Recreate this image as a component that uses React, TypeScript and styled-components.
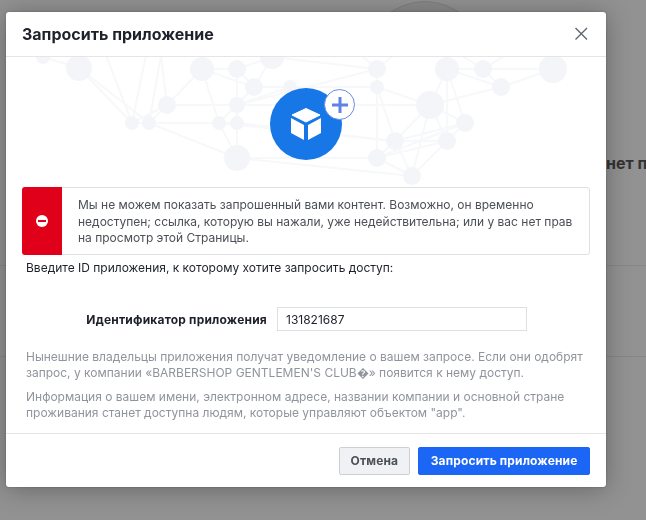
import React from 'react';
import styled, { createGlobalStyle } from 'styled-components';

const FONT = `Inter, "Liberation Sans", sans-serif`;

// node positions are relative to the hero block (page y - 57, page x - 6)
const nodes: [number, number, number][] = [
  [37, 0, 7], [73, 11, 13], [196, 12, 12], [231, 12, 9], [248, 30, 9], [266, 0, 12], [284, 30, 7],
  [161, 48, 9], [126, 66, 7], [143, 66, 7], [213, 66, 7], [231, 66, 7], [231, 48, 8], [231, 101, 13],
  [371, 12, 9], [371, 30, 7], [441, 12, 12], [477, 12, 9], [495, 30, 9], [547, 12, 14], [424, 48, 14],
  [459, 66, 9], [441, 84, 9], [389, 84, 9], [371, 101, 9], [406, 119, 9],
  // points above the clip, the lines run up under the header
  [100, -2, 0], [140, -2, 0], [155, -2, 0], [355, -2, 0], [388, -2, 0], [455, -2, 0], [500, -2, 0],
];

const edges: [number, number][] = [
  [0, 1], [1, 8], [1, 9], [8, 7], [9, 7], [7, 2], [2, 3], [3, 4], [4, 6], [5, 3], [5, 4], [2, 10], [2, 4],
  [7, 12], [12, 20], [8, 11], [9, 10], [9, 13], [10, 13], [11, 13], [12, 13], [3, 11], [4, 10], [4, 12], [13, 24],
  [13, 25], [6, 12], [14, 15], [15, 24], [15, 20], [15, 23], [14, 5], [16, 17], [17, 19], [16, 18], [17, 18],
  [18, 19], [18, 20], [16, 20], [16, 21], [16, 22], [20, 21], [20, 22], [20, 23], [21, 22], [21, 23], [22, 23],
  [22, 24], [23, 24], [23, 25], [24, 25], [22, 25], [21, 24], [10, 23], [11, 23], [20, 25], [6, 15], [14, 12],
  [26, 8], [27, 8], [28, 9], [29, 14], [30, 14], [31, 17], [32, 17], [28, 7],
];

const GlobalStyle = createGlobalStyle`
  html, body {
    margin: 0;
    padding: 0;
    background: #929292;
  }
  body {
    font-family: ${FONT};
  }
`;

const Page = styled.div`
  width: 646px;
  height: 520px;
  overflow: hidden;
  background: #929292;
  padding-top: 1px;
  box-sizing: border-box;
`;

const Avatar = styled.div`
  width: 120px;
  height: 120px;
  margin-left: 365px;
  border-radius: 50%;
  background: #8a8a8a;
  border: 1px solid #7f7f7f;
  box-sizing: border-box;
`;

const BackTitle = styled.div`
  margin: 32px 0 0 606px;
  width: 200px;
  font-size: 16px;
  line-height: 20px;
  font-weight: 700;
  color: #333;
  white-space: nowrap;
`;

const BackRow = styled.div<{ $height: number }>`
  height: ${p => p.$height}px;
  border-bottom: 1px solid #878787;
`;

const Modal = styled.div`
  position: fixed;
  top: 12px;
  left: 6px;
  width: 600px;
  height: 475px;
  display: flex;
  flex-direction: column;
  background: #fff;
  border-radius: 3px;
  box-shadow: 0 2px 26px rgba(0, 0, 0, 0.3), 0 0 2px rgba(0, 0, 0, 0.3);
`;

const Header = styled.div`
  height: 45px;
  flex: none;
  box-sizing: border-box;
  display: flex;
  align-items: center;
  justify-content: space-between;
  padding: 0 16px;
  border-bottom: 1px solid #e5e5e5;
`;

const Title = styled.h2`
  margin: 0;
  font-size: 16px;
  font-weight: 700;
  color: #1d2129;
`;

const Close = styled.button`
  display: flex;
  padding: 0;
  border: none;
  background: none;
  color: #606770;
`;

const Body = styled.div`
  flex: 1;
  min-height: 0;
`;

const Hero = styled.div`
  position: relative;
  height: 130px;
  display: flex;
  justify-content: center;
  padding-top: 31px;
  box-sizing: border-box;
`;

const Network = styled.svg`
  position: absolute;
  inset: 0;
`;

const AppIcon = styled.div`
  position: relative;
  width: 72px;
  height: 72px;
  border-radius: 50%;
  background: #1877e6;
  display: flex;
  align-items: center;
  justify-content: center;
`;

const Badge = styled.div`
  position: absolute;
  top: 1px;
  right: -13px;
  width: 31px;
  height: 31px;
  border-radius: 50%;
  background: #fff;
  border: 1px solid #6b8be8;
  box-sizing: border-box;
  display: flex;
  align-items: center;
  justify-content: center;
`;

const Alert = styled.div`
  margin: 0 16px;
  height: 68px;
  display: flex;
  background: #fff;
  border: 1px solid #dddfe2;
  border-radius: 3px;
  box-sizing: border-box;
`;

const AlertStripe = styled.div`
  width: 40px;
  flex: none;
  margin: -1px 0 -1px -1px;
  border-radius: 3px 0 0 3px;
  background: #e0001a;
  display: flex;
  align-items: center;
  justify-content: center;
`;

const NoEntry = styled.span`
  position: relative;
  width: 12px;
  height: 12px;
  border-radius: 50%;
  background: #fff;

  &::after {
    content: '';
    position: absolute;
    left: 2px;
    right: 2px;
    top: 5px;
    height: 2px;
    background: #e0001a;
  }
`;

const AlertText = styled.p`
  margin: 0;
  padding: 9px 16px 0;
  font-size: 12px;
  line-height: 16.5px;
  color: #4b4f56;
`;

const Lead = styled.p`
  margin: 5px 20px 0;
  font-size: 12px;
  line-height: 16px;
  color: #1d2129;
`;

const Field = styled.div`
  margin-top: 31px;
  display: flex;
  align-items: center;
`;

const FieldLabel = styled.label`
  width: 261px;
  margin-right: 10px;
  text-align: right;
  font-size: 12px;
  font-weight: 700;
  letter-spacing: 0.2px;
  color: #1d2129;
`;

const Input = styled.input`
  width: 250px;
  height: 24px;
  box-sizing: border-box;
  padding: 0 8px;
  border: 1px solid #dddfe2;
  font-family: ${FONT};
  font-size: 12px;
  color: #1d2129;
  outline: none;
`;

const Note = styled.p`
  margin: 0 20px 8px;
  font-size: 12px;
  line-height: 16px;
  color: #90949c;
`;

const Notes = styled.div`
  margin-top: 18px;
`;

const Footer = styled.div`
  height: 54px;
  flex: none;
  box-sizing: border-box;
  display: flex;
  align-items: center;
  justify-content: flex-end;
  gap: 8px;
  padding: 0 16px;
  border-top: 1px solid #e5e5e5;
`;

const Button = styled.button<{ $primary?: boolean }>`
  height: 28px;
  padding: 0 ${p => (p.$primary ? 11.5 : 11)}px;
  border-radius: 2px;
  border: 1px solid ${p => (p.$primary ? '#1b66f5' : '#ccd0d5')};
  background: ${p => (p.$primary ? '#1b66f5' : '#f0f1f4')};
  color: ${p => (p.$primary ? '#fff' : '#4b4f56')};
  font-family: ${FONT};
  font-size: 12px;
  font-weight: 700;
  letter-spacing: 0.15px;
`;

const App: React.FC = () => (
  <Page>
    <GlobalStyle />
    <Avatar />
    <BackTitle>нет прав</BackTitle>
    <BackRow $height={92} />
    <BackRow $height={90} />

    <Modal>
      <Header>
        <Title>Запросить приложение</Title>
        <Close aria-label="Закрыть">
          <svg width="18" height="18" viewBox="0 0 18 18">
            <path d="M3.5 3 L15 14.5 M15 3 L3.5 14.5" stroke="currentColor" strokeWidth="1.4" />
          </svg>
        </Close>
      </Header>
      <Body>
        <Hero>
          <Network width="600" height="130" viewBox="0 0 600 130">
            {edges.map(([a, b]) => (
              <line
                key={`${a}-${b}`}
                x1={nodes[a][0]}
                y1={nodes[a][1]}
                x2={nodes[b][0]}
                y2={nodes[b][1]}
                stroke="#f7f8fa"
                strokeWidth="2"
              />
            ))}
            {nodes.map(([x, y, r]) => (
              <circle key={`${x}-${y}`} cx={x} cy={y} r={r} fill="#f4f5f9" />
            ))}
          </Network>
          <AppIcon>
            <svg width="30" height="32" viewBox="0 0 30 32" fill="#fff">
              <path d="M15 0.5 L29 7 L15 14 L1 7 Z" stroke="#fff" strokeLinejoin="round" />
              <path d="M0 10 L13 17 V32 L0 25 Z" />
              <path d="M30 10 L17 17 V32 L30 25 Z" />
            </svg>
            <Badge>
              <svg width="18" height="18" viewBox="0 0 18 18">
                <path d="M9 1 V17 M1 9 H17" stroke="#5f82e6" strokeWidth="3" />
              </svg>
            </Badge>
          </AppIcon>
        </Hero>
        <Alert>
          <AlertStripe>
            <NoEntry />
          </AlertStripe>
          <AlertText>
            Мы не можем показать запрошенный вами контент. Возможно, он временно недоступен; ссылка, которую вы
            нажали, уже недействительна; или у вас нет прав на просмотр этой Страницы.
          </AlertText>
        </Alert>
        <Lead>Введите ID приложения, к которому хотите запросить доступ:</Lead>
        <Field>
          <FieldLabel>Идентификатор приложения</FieldLabel>
          <Input readOnly value="131821687" />
        </Field>
        <Notes>
          <Note>
            Нынешние владельцы приложения получат уведомление о вашем запросе. Если они одобрят запрос, у компании
            «BARBERSHOP GENTLEMEN'S CLUB{'\uFFFD'}» появится к нему доступ.
          </Note>
          <Note>
            Информация о вашем имени, электронном адресе, названии компании и основной стране проживания станет
            доступна людям, которые управляют объектом "app".
          </Note>
        </Notes>
      </Body>
      <Footer>
        <Button>Отмена</Button>
        <Button $primary>Запросить приложение</Button>
      </Footer>
    </Modal>
  </Page>
);

export default App;
